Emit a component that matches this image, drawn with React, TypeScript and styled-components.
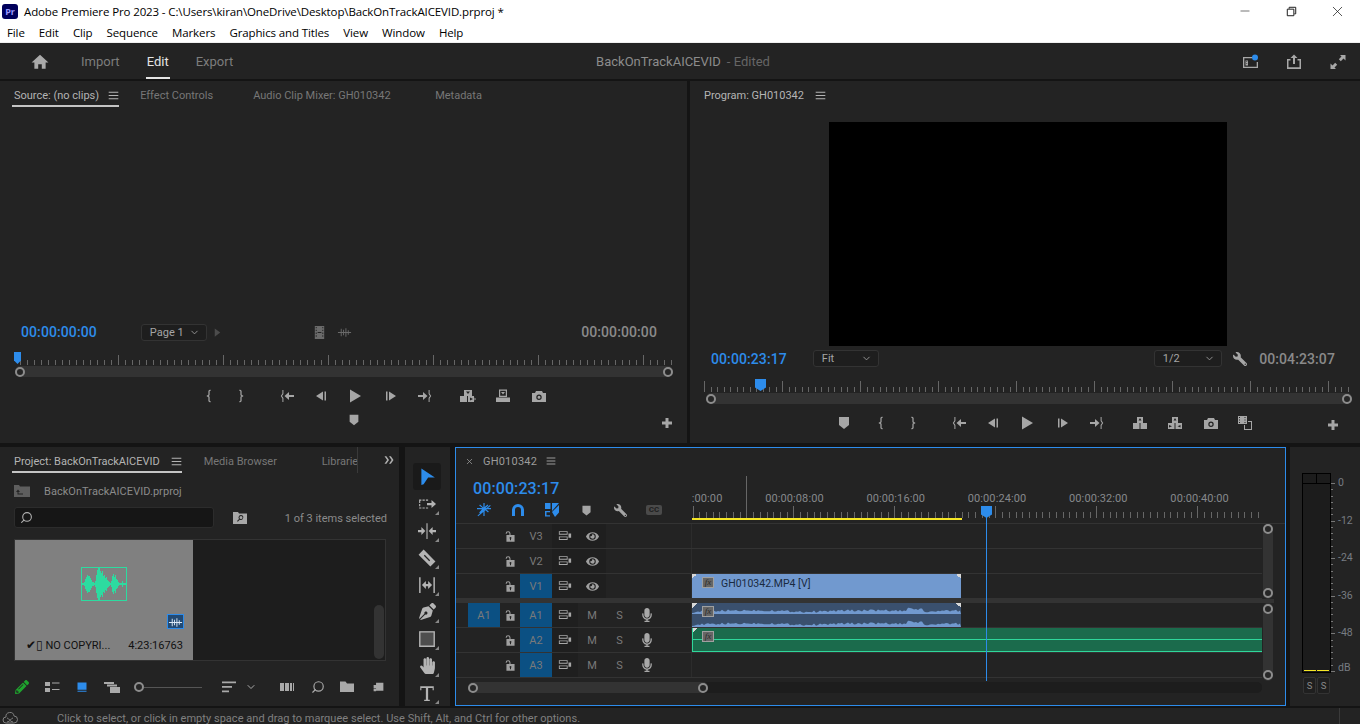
import React from "react"
import styled, {createGlobalStyle} from "styled-components"
import {FaEye, FaHandPaper, FaMicrophone, FaPenNib, FaPencilAlt, FaWrench} from "react-icons/fa"
import {ChevronDown, Search, Minus, X} from "lucide-react"

const GlobalStyle = createGlobalStyle`
    html, body {
        margin: 0;
        padding: 0;
        background: #141414;
    }
    * {
        box-sizing: border-box;
    }
`;

const BLUE = "#2d8ceb";

const Shell = styled.div`
    width: 1360px;
    height: 724px;
    overflow: hidden;
    display: flex;
    flex-direction: column;
    background: #141414;
    font-family: Roboto, "Liberation Sans", sans-serif;
    font-size: 11px;
    color: #9a9a9a;
`;

const TitleBar = styled.div`
    height: 22px;
    background: #fff;
    color: #000;
    display: flex;
    align-items: center;
    padding-left: 2px;
    font: 11.5px "Open Sans", sans-serif;
    letter-spacing: -0.12px;
`;

const AppLogo = styled.div`
    width: 16px;
    height: 15px;
    margin-right: 6px;
    border-radius: 3px;
    background: #00005b;
    color: #9999ff;
    font: bold 9px/15px "Open Sans", sans-serif;
    text-align: center;
`;

const WindowButtons = styled.div`
    margin-left: auto;
    display: flex;
    color: #111;
`;

const WindowButton = styled.div`
    width: 46px;
    height: 22px;
    display: flex;
    align-items: center;
    justify-content: center;
`;

const MenuBar = styled.div`
    height: 21px;
    background: #fff;
    border-bottom: 1px solid #efefef;
    color: #000;
    display: flex;
    align-items: center;
    gap: 14.1px;
    padding: 1px 0 0 7px;
    font: 11.5px "Open Sans", sans-serif;
    letter-spacing: -0.12px;
`;

const Header = styled.div`
    height: 36px;
    background: #232323;
    display: grid;
    grid-template-columns: 1fr auto 1fr;
    align-items: center;
    padding-top: 1px;
`;

const WorkspaceNav = styled.div`
    display: flex;
    align-items: center;
    height: 100%;
    padding-left: 31px;
    color: #aaa;
`;

const NavTab = styled.div<{ $active?: boolean }>`
    height: 100%;
    display: flex;
    align-items: center;
    font-size: 13px;
    margin-left: 25px;
    padding: 0 1px;
    color: ${props => props.$active ? "#e4e4e4" : "#7d7d7d"};
    box-shadow: ${props => props.$active ? "inset 0 -2px 0 #e4e4e4" : "none"};
    &:first-of-type {
        margin-left: 31px;
    }
`;

const DocTitle = styled.div`
    font-size: 13px;
    color: #8c8c8c;
    padding-left: 6px;
    span {
        color: #666;
        margin-left: 6px;
    }
`;

const HeaderIcons = styled.div`
    display: flex;
    justify-content: flex-end;
    gap: 28px;
    padding-right: 14px;
    color: #a8a8a8;
`;

const Workspace = styled.div`
    flex: 1;
    display: flex;
    flex-direction: column;
    gap: 4px;
    padding-top: 2px;
`;

const TopRow = styled.div`
    height: 362px;
    display: flex;
    gap: 3px;
`;

const BottomRow = styled.div`
    height: 259px;
    display: flex;
`;

const Panel = styled.div<{ $w?: number; $pb?: number }>`
    width: ${props => props.$w ? props.$w + "px" : "auto"};
    flex: ${props => props.$w ? "none" : 1};
    padding-bottom: ${props => props.$pb || 0}px;
    background: #232323;
    display: flex;
    flex-direction: column;
    position: relative;
`;

const TabRow = styled.div`
    height: 26px;
    padding-left: 12px;
    display: flex;
    align-items: center;
    flex: none;
`;

const Tab = styled.div<{ $active?: boolean; $bright?: boolean; $w?: number; $ml?: number; $gap?: number; $clip?: boolean }>`
    display: flex;
    align-items: center;
    gap: ${props => props.$gap || 9}px;
    height: 100%;
    padding: 3px 0 0 2px;
    margin-left: ${props => props.$ml || 0}px;
    width: ${props => props.$w ? props.$w + "px" : "auto"};
    flex: none;
    white-space: nowrap;
    overflow: hidden;
    border-right: ${props => props.$clip ? "1px solid #3a3a3a" : "none"};
    color: ${props => props.$active || props.$bright ? "#b4b4b4" : "#777"};
    box-shadow: ${props => props.$active ? "inset 0 -2px 0 #c4c4c4" : "none"};
`;

const Viewer = styled.div`
    flex: 1;
    display: flex;
    align-items: flex-start;
    padding: 15px 0 0 139px;
`;

const VideoFrame = styled.div`
    width: 398px;
    height: 224px;
    background: #000;
`;

const MetaRow = styled.div<{ $pr: number; $mb: number; $h: number }>`
    height: ${props => props.$h}px;
    margin-bottom: ${props => props.$mb}px;
    padding: 0 ${props => props.$pr}px 0 21px;
    display: flex;
    align-items: center;
    flex: none;
`;

const Timecode = styled.div<{ $blue?: boolean; $size?: number; $push?: boolean; $mt?: number }>`
    font-size: ${props => props.$size || 14}px;
    font-weight: 500;
    letter-spacing: 0.1px;
    margin-left: ${props => props.$push ? "auto" : 0};
    margin-top: ${props => props.$mt || 0}px;
    color: ${props => props.$blue ? BLUE : "#8a8a8a"};
`;

const Dropdown = styled.div<{ $ml?: number; $w?: number }>`
    width: ${props => props.$w || 66}px;
    height: 17px;
    margin-left: ${props => props.$ml || 0}px;
    padding: 0 6px 0 8px;
    display: flex;
    align-items: center;
    justify-content: space-between;
    background: #1e1e1e;
    border: 1px solid #333;
    border-radius: 3px;
    color: #a5a5a5;
    svg {
        color: #999;
    }
`;

const RulerWrap = styled.div<{ $h: number }>`
    position: relative;
    height: ${props => props.$h}px;
    flex: none;
    svg {
        display: block;
    }
`;

const PlayheadFlag = styled.div<{ $x: number; $top: number; $w: number }>`
    position: absolute;
    left: ${props => props.$x}px;
    top: ${props => props.$top}px;
    width: ${props => props.$w}px;
    height: 12px;
    background: ${BLUE};
    clip-path: polygon(0 0, 100% 0, 100% 70%, 50% 100%, 0 70%);
`;

const ScrubTrack = styled.div<{ $ml: number; $mr: number }>`
    height: 11px;
    margin: 0 ${props => props.$mr}px 0 ${props => props.$ml}px;
    background: #333;
    border-radius: 5px;
    display: flex;
    align-items: center;
    justify-content: space-between;
    flex: none;
`;

const Knob = styled.div`
    width: 10px;
    height: 10px;
    border-radius: 50%;
    border: 2.5px solid #8d8d8d;
    background: #262626;
    flex: none;
`;

const ControlRow = styled.div<{ $pl: number; $mt: number; $pr?: number }>`
    height: 22px;
    flex: none;
    margin-top: ${props => props.$mt}px;
    padding: 0 ${props => props.$pr || 0}px 0 ${props => props.$pl}px;
    display: flex;
    align-items: center;
    color: #a6a6a6;
`;

const Ctl = styled.div<{ $gap?: number }>`
    width: 16px;
    height: 16px;
    flex: none;
    margin-left: ${props => props.$gap || 0}px;
`;

const AddButton = styled(Ctl)`
    margin-left: auto;
    margin-top: 4px;
`;

const ProjectPath = styled.div`
    height: 16px;
    margin: 10px 0 0 14px;
    display: flex;
    align-items: center;
    gap: 14px;
    color: #8b8b8b;
    font-size: 11px;
    letter-spacing: 0.05px;
`;

const SearchRow = styled.div`
    margin: 8px 12px 0 14px;
    height: 21px;
    display: flex;
    align-items: center;
    color: #8b8b8b;
`;

const SearchBox = styled.div`
    width: 200px;
    height: 21px;
    background: #161616;
    border: 1px solid #2c2c2c;
    border-radius: 3px;
    padding-left: 5px;
    display: flex;
    align-items: center;
    color: #b0b0b0;
    margin-right: 18px;
`;

const FlippedSearch = styled(Search)`
    transform: scaleX(-1);
`;

const FlippedWrench = styled(FaWrench)`
    transform: scaleX(-1);
`;

const Count = styled.div`
    margin-left: auto;
    padding-top: 1px;
    font-size: 11px;
`;

const Bin = styled.div`
    margin: 11px 13px 0 14px;
    height: 122px;
    background: #1d1d1d;
    border: 1px solid #333;
    display: flex;
    position: relative;
`;

const Thumb = styled.div`
    width: 178px;
    background: #808080;
    display: flex;
    flex-direction: column;
    color: #111;
`;

const ThumbWave = styled.div`
    width: 46px;
    height: 34px;
    margin: 27px 0 0 66px;
    border: 1px solid #2ddba0;
`;

const ThumbBadge = styled.div`
    width: 17px;
    height: 15px;
    margin: 13px 0 0 152px;
    background: #234a73;
    border: 1px solid ${BLUE};
    color: #dbe9f7;
`;

const ThumbLabel = styled.div`
    margin-top: 10px;
    padding: 0 10px 0 11px;
    display: flex;
    justify-content: space-between;
    align-items: center;
    white-space: nowrap;
    font-size: 11px;
    b {
        font-family: "DejaVu Sans", sans-serif;
        font-weight: bold;
        font-size: 12px;
        line-height: 12px;
    }
`;

const BinScroll = styled.div`
    position: absolute;
    right: 1px;
    bottom: 1px;
    width: 10px;
    height: 54px;
    border-radius: 5px;
    background: #333;
`;

const ProjectTools = styled.div`
    margin-top: 16px;
    padding-left: 14px;
    height: 20px;
    display: flex;
    align-items: center;
    color: #a9a9a9;
`;

const ToolSpot = styled.div<{ $gap: number; $w?: number; $color?: string }>`
    margin-left: ${props => props.$gap}px;
    width: ${props => props.$w || 16}px;
    height: 16px;
    flex: none;
    display: flex;
    align-items: center;
    justify-content: center;
    color: ${props => props.$color || "inherit"};
`;

const ZoomSlider = styled.div`
    width: 68px;
    margin-left: 14px;
    display: flex;
    align-items: center;
    flex: none;
    &::after {
        content: "";
        flex: 1;
        height: 1px;
        background: #555;
    }
`;

const ToolColumn = styled.div`
    width: 45px;
    margin-left: 6px;
    flex: none;
    background: #232323;
    display: flex;
    flex-direction: column;
    align-items: center;
    padding-top: 16px;
    overflow: hidden;
    color: #b4b4b4;
`;

const ToolBtn = styled.div<{ $selected?: boolean }>`
    width: 28px;
    height: 27px;
    margin-left: -1px;
    flex: none;
    display: flex;
    align-items: center;
    justify-content: center;
    border-radius: 3px;
    background: ${props => props.$selected ? "#1a1a1a" : "transparent"};
    color: ${props => props.$selected ? BLUE : "inherit"};
    position: relative;
    &::after {
        content: "";
        display: ${props => props.$selected ? "none" : "block"};
        position: absolute;
        right: 2px;
        bottom: 2px;
        border: 2px solid transparent;
        border-right-color: #888;
        border-bottom-color: #888;
    }
`;

const TimelinePanel = styled.div`
    width: 831px;
    margin-left: 5px;
    flex: none;
    background: #232323;
    border: 1px solid ${BLUE};
    display: flex;
    flex-direction: column;
    position: relative;
    overflow: hidden;
`;

const SeqTabs = styled.div`
    height: 26px;
    flex: none;
    padding: 0 0 0 9px;
    display: flex;
    align-items: center;
    font-size: 11px;
    letter-spacing: 0.2px;
    color: #9c9c9c;
    span {
        margin: 0 9px 0 9px;
    }
`;

const SeqHead = styled.div`
    height: 50px;
    flex: none;
    display: flex;
    border-bottom: 1px solid #333;
`;

const SeqControls = styled.div`
    width: 236px;
    padding-left: 17px;
    flex: none;
    display: flex;
    flex-direction: column;
`;

const SeqToolRow = styled.div`
    display: flex;
    align-items: center;
    margin: 4px 0 0 2px;
    color: #a4a4a4;
`;

const SeqTool = styled.div<{ $color?: string }>`
    width: 18px;
    height: 16px;
    margin-right: 16px;
    flex: none;
    color: ${props => props.$color || "inherit"};
    display: flex;
    align-items: center;
    justify-content: center;
`;

const CcBadge = styled.div`
    width: 16px;
    height: 10px;
    border-radius: 2px;
    background: #4a4a4a;
    color: #232323;
    font-size: 8px;
    font-weight: 900;
    line-height: 10px;
    text-align: center;
`;

const RulerBox = styled.div`
    width: 570px;
    position: relative;
    overflow: hidden;
    svg {
        position: absolute;
        left: 0;
        top: 0;
    }
`;

const RulerLabels = styled.div`
    display: flex;
    margin: 18px 0 0 -49.5px;
`;

const RulerLabel = styled.div`
    width: 101.3px;
    flex: none;
    text-align: center;
    color: #86898c;
    font-size: 11px;
    letter-spacing: 0.1px;
`;

const TrackGroup = styled.div`
    display: flex;
    flex: none;
`;

const TrackList = styled.div`
    width: 806px;
    flex: none;
`;

const Track = styled.div`
    height: 25px;
    display: flex;
    border-bottom: 1px solid #333;
`;

const TrackHead = styled.div`
    width: 236px;
    padding-left: 12px;
    display: flex;
    flex: none;
    color: #7a7a7a;
    border-right: 1px solid #2c2c2c;
`;

const Cell = styled.div<{ $w: number; $bg?: string }>`
    width: ${props => props.$w}px;
    flex: none;
    background: ${props => props.$bg || "transparent"};
    display: flex;
    align-items: center;
    justify-content: center;
    font-size: 11px;
`;

const TrackLane = styled.div`
    width: 570px;
    display: flex;
    overflow: hidden;
`;

const Clip = styled.div<{ $w: number; $bg: string; $tail?: boolean; $edge?: string }>`
    width: ${props => props.$w}px;
    flex: none;
    background: ${props => props.$bg};
    color: #1a2a40;
    display: flex;
    align-items: flex-start;
    gap: 7px;
    padding: 3px 0 0 ${props => props.$edge ? 9 : 10}px;
    position: relative;
    border-left: ${props => props.$edge ? "1px solid " + props.$edge : "none"};
    &::before, &::after {
        content: "";
        position: absolute;
        top: 0;
        width: 5px;
        height: 5px;
    }
    &::before {
        left: 0;
        background: linear-gradient(135deg, #d8d8d8 50%, transparent 50%);
    }
    &::after {
        right: 0;
        display: ${props => props.$tail ? "block" : "none"};
        background: linear-gradient(225deg, #d8d8d8 50%, transparent 50%);
    }
`;

const ClipName = styled.div`
    font-size: 10.5px;
    line-height: 12px;
    margin-top: 1px;
    position: relative;
`;

const FxBadge = styled.div`
    width: 12px;
    height: 11px;
    flex: none;
    border: 1px solid #a0a0a0;
    background: #666;
    color: #2a2a2a;
    font: italic 9px/9px "Liberation Serif", serif;
    text-align: center;
    position: relative;
`;

const ClipWave = styled.svg`
    position: absolute;
    left: 0;
    top: 0;
`;

const GreenLine = styled.div`
    position: absolute;
    left: 0;
    right: 0;
    top: 11px;
    height: 1px;
    background: #2fd79b;
`;

const GreenBottom = styled(GreenLine)`
    top: 23px;
`;

const TrackDivider = styled.div`
    height: 4px;
    width: 818px;
    background: #333;
    flex: none;
`;

const VScroll = styled.div<{ $tail?: boolean }>`
    width: 10px;
    margin: 0 0 ${props => props.$tail ? "-3px" : 0} 1px;
    background: #333;
    border-radius: 5px;
    display: flex;
    flex-direction: column;
    align-items: center;
    justify-content: space-between;
    padding: ${props => props.$tail ? "1px" : 0} 0 1px;
    flex: none;
`;

const HScroll = styled.div`
    height: 11px;
    margin: 4px 23px 0 12px;
    background: #1d1d1d;
    border-radius: 5px;
    flex: none;
    display: flex;
`;

const HThumb = styled.div`
    width: 240px;
    background: #333;
    border-radius: 5px;
    display: flex;
    align-items: center;
    justify-content: space-between;
`;

const PlayheadLine = styled.div`
    position: absolute;
    left: 530px;
    top: 69px;
    width: 1px;
    height: 164px;
    background: ${BLUE};
`;

const TimelineFlag = styled.div`
    position: absolute;
    left: 525px;
    top: 58px;
    width: 11px;
    height: 12px;
    background: ${BLUE};
    clip-path: polygon(0 0, 100% 0, 100% 70%, 50% 100%, 0 70%);
`;

const MeterPanel = styled.div`
    width: 70px;
    margin-left: 4px;
    flex: none;
    background: #232323;
    padding: 26px 0 0 12px;
    display: flex;
    flex-direction: column;
`;

const MeterBody = styled.div`
    display: flex;
    height: 200px;
`;

const MeterBars = styled.div`
    width: 29px;
    height: 200px;
    background: #1c1c1c;
    border: 1px solid #000;
    display: flex;
    flex-direction: column;
    flex: none;
`;

const MeterCaps = styled.div`
    height: 10px;
    border-bottom: 1px solid #000;
    display: flex;
    justify-content: center;
    flex: none;
    &::after {
        content: "";
        width: 1px;
        background: #000;
    }
`;

const MeterPeak = styled.div`
    margin-top: auto;
    margin-bottom: 1px;
    height: 1px;
    display: flex;
    gap: 1px;
    padding: 0 1px;
    &::before, &::after {
        content: "";
        flex: 1;
        background: #f5e625;
    }
`;

const MeterScale = styled.div`
    position: relative;
    width: 28px;
    svg {
        position: absolute;
        left: 0;
        top: 0;
    }
`;

const MeterLabels = styled.div`
    margin-left: 7px;
    padding-top: 3px;
    display: flex;
    flex-direction: column;
    font-size: 10.5px;
    color: #777c82;
    position: relative;
    line-height: 14px;
`;

const MeterMark = styled.div`
    height: 37.5px;
    flex: none;
    &:last-child {
        margin-top: -3px;
    }
`;

const SoloRow = styled.div`
    display: flex;
    gap: 1px;
    margin: 4px 0 0 1px;
`;

const SoloBtn = styled.div`
    width: 13px;
    height: 17px;
    border: 1px solid #333;
    border-radius: 2px;
    background: #1f1f1f;
    font-size: 9.5px;
    text-align: center;
    line-height: 15px;
    color: #888;
`;

const StatusBar = styled.div`
    height: 16px;
    margin-top: 2px;
    background: #232323;
    display: flex;
    align-items: flex-start;
    padding: 3px 20px 0 2px;
    color: #808080;
    font-size: 11px;
    overflow: hidden;
    span {
        margin: 1px 0 0 39px;
        letter-spacing: 0.03px;
    }
`;

const StatusEnd = styled.div`
    margin: -3px 0 0 auto;
    width: 1px;
    height: 16px;
    background: #3a3a3a;
`;

// every transport / tool glyph on one 16x16 grid
const glyphs: Record<string, React.ReactNode> = {
    menu: <path d="M1 2.5h14v1.4H1zM1 7.3h14v1.4H1zM1 12.1h14v1.4H1z"/>,
    home: <path d="M8 1.5l7.5 7H13V14H9.6v-4H6.4v4H3V8.5H.5z"/>,
    braceIn: <path fill="none" stroke="currentColor" strokeWidth="1.2" d="M9.5 2L8 3v4L6.5 8 8 9v4l1.5 1"/>,
    braceOut: <path fill="none" stroke="currentColor" strokeWidth="1.2" d="M6.5 2L8 3v4l1.5 1L8 9v4l-1.5 1"/>,
    goIn: <path d="M3.4 2h1v4l-1.4 2 1.4 2v4h-1v-3.6L1.8 8l1.6-2.4zM15 7h-5V4L5.5 8l4.5 4V9h5z"/>,
    goOut: <path d="M12.6 2h-1v4l1.4 2-1.4 2v4h1v-3.6L14.2 8l-1.6-2.4zM1 7h5V4l4.5 4L6 12V9H1z"/>,
    stepBack: <path d="M10 3.5v9L3 8zM11.5 3.5H13v9h-1.5z"/>,
    stepFwd: <path d="M6 3.5v9L13 8zM3 3.5h1.5v9H3z"/>,
    play: <path d="M3 1.5L14 8 3 14.5z"/>,
    marker: <path d="M3 2h10v8l-5 4-5-4z"/>,
    plus: <path d="M6.5 3h3v3.5H13v3H9.5V13h-3V9.5H3v-3h3.5z"/>,
    insert: <path fillRule="evenodd" d="M4 2h8v6H4zm2 1.5L8 6l2-2.5zM0 8h7v6H0zM8 8h6v6H8zm2 1.5v3l3-1.5zM14.5 9.5L16 11l-1.5 1.5z"/>,
    overwrite: <path fillRule="evenodd" d="M4 1.5h8V9H4zm1.2 1.2v5h5.6v-5zM6 4h4L8 6.5zM1 9.5h14V14H1z"/>,
    lift: <path fillRule="evenodd" d="M5 2h6v6H5zm3 1L6.5 5.5h3zM1 8h6.5v6H1zM8.5 8H15v6H8.5z"/>,
    extract: <path fillRule="evenodd" d="M5 2h6v6H5zm3 1L6.5 5.5h3zM1 8h6.5v6H1zm1 2v2.5L5 11.2zM8.5 8H15v6H8.5zm5 2L10.5 11.2l3 1.3z"/>,
    camera: <path fillRule="evenodd" d="M5 3h6l1 2h3v9H1V5h3zm3 3.5a2.7 2.7 0 100 5.4 2.7 2.7 0 000-5.4zm0 1.2a1.5 1.5 0 110 3 1.5 1.5 0 010-3z"/>,
    compare: <path fillRule="evenodd" d="M1 1h9v8H1zm1 1v1h1V2zm0 2.5v1h1v-1zM2 7v1h1V7zm5.5-5v1h1V2zm0 2.5v1h1v-1zM7.5 7v1h1V7zM11 6h4v9H7v-5h1v4h6V7h-3z"/>,
    film: <path fillRule="evenodd" d="M3 1h10v14H3zm1 1v1.5h1V2zm7 0v1.5h1V2zM4 5v1.5h1V5zm7 0v1.5h1V5zM4 8v1.5h1V8zm7 0v1.5h1V8zm-7 3v1.5h1V11zm7 0v1.5h1V11zM6 7.5h4v1H6z"/>,
    waves: <path d="M1 7.5h14v1H1zM4 4h1v8H4zM6.5 5h1v6h-1zM9 3.5h1v9H9zM11.5 5.5h1v5h-1z"/>,
    triRight: <path d="M4 2l8 6-8 6z"/>,
    folderUp: <path fillRule="evenodd" d="M0 2h5l1 1.5h10V14H0zm4 4.5L2 9h1.5v2.5H9v-1H4.5V9H6z"/>,
    folderFind: <path fillRule="evenodd" d="M1 2h5l1 1.5h8V14H1zm8 3a2.5 2.5 0 00-2 4l-2 2 .8.8 2-2A2.5 2.5 0 109 5zm0 1a1.5 1.5 0 110 3 1.5 1.5 0 010-3z"/>,
    folder: <path d="M1 2.5h5.5l1.5 2h7V13H1z"/>,
    newItem: <path fillRule="evenodd" d="M5 2h9v10h-9V9H2V5h3zM2 9.5h3v3H2z"/>,
    listView: <path d="M1 3h5v4H1zM1 9h5v4H1zM8 3.5h7.5v1H8zM8 10h7.5v1H8z"/>,
    iconView: <path d="M2 2h12v9.5H2zM2 13h12v1.2H2z"/>,
    freeform: <path fillRule="evenodd" d="M0 3h10v2H0zM3 5.5h10v2H3zM6 8h10v6H6z"/>,
    sort: <path d="M1 2.5h14v1.7H1zM1 7h10v1.7H1zM1 11.5h7v1.7H1z"/>,
    automate: <path d="M1 4h4v8H1zM6 4h4v8H6zM11 4h2v8h-2zM14 4h1v8h-1z"/>,
    selection: <path d="M3 .5L15 8.5H9L5 14.5 3 15z"/>,
    trackSelect: <path d="M1 4h2v1H1zM4 4h2v1H4zM1 5v2h1V5zM1 8v2h1V8zM1 11h2v1H1zM4 11h2v1H4zM7 11h2v1H7zM7 4h2v1H7zM8 7h4V4.5L16 8l-4 3.5V9H8z"/>,
    ripple: <path d="M7.5 1h1v14h-1zM6.5 8L3 4.5V7H0v2h3v2.5zM9.5 8L13 4.5V7h3v2h-3v2.5z"/>,
    razor: <path fillRule="evenodd" d="M5 .5L15.5 11 11 15.5.5 5zM6 5.200L5.200 6 10 10.800l.8-.8z"/>,
    slip: <path d="M1 1h1.3v14H1zM13.7 1H15v14h-1.3zM3.5 8L7 4.5V7h2V4.5L12.5 8 9 11.5V9H7v2.5z"/>,
    rect: <>
        <path d="M1 1h14v14H1z" opacity=".3"/>
        <path fillRule="evenodd" d="M1 1h14v14H1zm1.2 1.2v11.6h11.6V2.200z"/>
    </>,
    text: <path d="M2 2h12v3.5h-1V3.5H9V14h1.5v1h-5v-1H7V3.5H3v2H2z"/>,
    snap: <path d="M7.4 1h1.2v4l3-2.500.8.9L9.500 6H15v1.200H10l2.800 2.400-.8.9-3.400-3V14H7.400V8.500l-3.400 3-.8-.9L6 7.200H1V6h5.500L3.200 3.400 4 2.500l3.400 3zM1.500 13.500L14 3l.7.8L2.200 14.300z"/>,
    magnet: <path fillRule="evenodd" d="M2 14V8a6 6 0 0112 0v6h-3V8a3 3 0 00-6 0v6z"/>,
    linked: <path d="M1 1h5.500v6H1zM8 1h7L8 9zM8 10l7-7v7.500l-4 4.500zM1 9h5v1.200H2.500v3H6v1.200H1z"/>,
    toggle: <path fillRule="evenodd" d="M1 2.500h10v4H1zm1 1v2h8v-2zM1 8.500h10v4H1zm1 1v2h8v-2zM12 5h3v5h-3z"/>,
    lock: <path fillRule="evenodd" d="M5 1.500a3 3 0 013 3V6h5v8.500H3V6h3.700V4.500a1.700 1.700 0 00-3.400 0H2a3 3 0 013-3zM8 8.500a1.200 1.200 0 00-.6 2.200V12.500h1.200v-1.800A1.200 1.200 0 008 8.500z"/>,
    workspaces: <>
        <path fillRule="evenodd" d="M1 3h9v1.300H2.300v8.400h12.400V8H16v6H1zM3.500 6.500H6v5H3.500zM4.300 7.300v.8h.9v-.8zm0 2v.8h.9v-.8z"/>
        <circle cx="13" cy="3.500" r="3" fill={BLUE}/>
    </>,
    share: <path fillRule="evenodd" d="M8 .5L11.500 4H9v6H7V4H4.500zM1 5h3.500v1.500H2.500v6.800h11V6.500h-2V5H15v10H1z"/>,
    fullscreen: <path d="M10 1h5.500v5.500L13.500 4.500 10.800 7.200 8.800 5.200 11.500 2.500zM6 15H.5V9.500L2.500 11.500 5.200 8.800 7.200 10.800 4.500 13.500z"/>,
    cloud: <path fill="none" stroke="currentColor" d="M4 12a3 3 0 010-6 4 4 0 018-1 3.500 3.500 0 010 7zM5 7c2 0 3 4 6 4M11 7c-2 0-3 4-6 4"/>,
    restore: <path fill="none" stroke="currentColor" strokeWidth="1" d="M3.500 5.500h7v7h-7zM5.500 5V3.500h7v7H11"/>,
    more: <path d="M2 3h2.500L8 8l-3.500 5H2l3.500-5zM8 3h2.500L14 8l-3.500 5H8l3.500-5z"/>,
};

const Glyph = ({name, size = 16, color}: { name: string; size?: number; color?: string }) => (
    <svg width={size} height={size} viewBox="0 0 16 16" fill="currentColor" color={color}>
        {glyphs[name]}
    </svg>
)

const Ticks = ({width, height, start, step, every, major, minor, from = 0, baseline}: {
    width: number; height: number; start: number; step: number; every: number;
    major: number; minor: number; from?: number; baseline: number;
}) => {
    let d = ""
    for (let i = 0; start + i * step < width; i++) {
        const x = Math.round(start + i * step) + 0.5
        if (x < from) continue
        d += `M${x} ${baseline}v-${i % every === 0 ? major : minor}`
    }
    return (
        <svg width={width} height={height}>
            <path d={d} stroke="#666" fill="none"/>
        </svg>
    )
}

// dB scale next to the meter: one long tick every 6 steps
const MeterTicks = () => {
    let d = ""
    for (let i = 0; i <= 30; i++) {
        const y = Math.round(10 + i * 6.26) + 0.5
        d += `M0 ${y}h${i % 6 === 0 ? 4 : 2}`
    }
    return (
        <svg width={6} height={200}>
            <path d={d} stroke="#777"/>
        </svg>
    )
}

// repeatable pseudo noise so the clip wave keeps its shape between renders
const noise = (i: number) => {
    const v = Math.sin(i * 12.9898) * 43758.5453
    return v - Math.floor(v)
}

const audioWave = (base: number, width: number) => {
    let d = `M0 ${base}`
    for (let x = 0; x <= width; x += 2) {
        const swell = 1 + 1.5 * Math.abs(Math.sin(x / 37)) + (x > 215 && x < 232 ? 2.5 : 0)
        d += `L${x} ${(base - swell - noise(x) * 2.2).toFixed(1)}`
    }
    return d + `L${width} ${base}Z`
}

const thumbAmps = [1, 1, 2, 5, 7, 9, 8, 8, 6, 4, 2, 2, 1, 3, 9, 14, 12, 16, 13, 11, 13, 8, 9, 6, 7, 4, 3, 2, 1, 3, 8, 10, 7, 9, 5, 4, 2, 1, 1, 1, 3, 1, 1, 1]

const ThumbWaveform = () => {
    const d = thumbAmps.map((a, i) => `M${i + 0.5} ${16 - a}v${a * 2}`).join("")
    return (
        <svg width="44" height="32" stroke="#2ddba0">
            <path d={d}/>
            <path d="M16.5 0v32"/>
        </svg>
    )
}

const Controls = ({names}: { names: [string, number][] }) => (
    <>
        {names.map(([name, gap], i) => (
            <Ctl key={name + i} $gap={gap}><Glyph name={name}/></Ctl>
        ))}
    </>
)

const sourceControls: [string, number][] = [
    ["braceIn", 0], ["braceOut", 16], ["goIn", 30], ["stepBack", 18], ["play", 18],
    ["stepFwd", 20], ["goOut", 18], ["insert", 27], ["overwrite", 19], ["camera", 20],
]

const programControls: [string, number][] = [
    ["marker", 0], ["braceIn", 21], ["braceOut", 16], ["goIn", 30], ["stepBack", 18], ["play", 18],
    ["stepFwd", 20], ["goOut", 18], ["lift", 27], ["extract", 19], ["camera", 20], ["compare", 18],
]

const menus = ["File", "Edit", "Clip", "Sequence", "Markers", "Graphics and Titles", "View", "Window", "Help"]
const tools = ["trackSelect", "ripple", "razor", "slip", "pen", "rect", "hand", "text"]
const rulerTimes = ["00:00:00:00", "00:00:08:00", "00:00:16:00", "00:00:24:00", "00:00:32:00", "00:00:40:00"]
const meterMarks = ["0", "-12", "-24", "-36", "-48", "dB"]

const ToolGlyph = ({name}: { name: string }) => {
    if (name === "pen") return <FaPenNib size={17}/>
    if (name === "hand") return <FaHandPaper size={17}/>
    return <Glyph name={name} size={18}/>
}

const VideoTrack = ({name, target}: { name: string; target?: boolean }) => (
    <TrackHead>
        <Cell $w={32}/>
        <Cell $w={20}><Glyph name="lock" size={13} color="#a0a0a0"/></Cell>
        <Cell $w={32} $bg={target ? "#0b5083" : undefined}>{name}</Cell>
        <Cell $w={26} $bg="#1f1f1f"><Glyph name="toggle" size={14} color="#a8a8a8"/></Cell>
        <Cell $w={28} $bg="#1f1f1f"><FaEye size={13} color="#a0a0a0"/></Cell>
    </TrackHead>
)

const AudioTrack = ({name, source}: { name: string; source?: boolean }) => (
    <TrackHead>
        <Cell $w={32} $bg={source ? "#0b5083" : undefined}>{source ? "A1" : ""}</Cell>
        <Cell $w={20}><Glyph name="lock" size={13} color="#a0a0a0"/></Cell>
        <Cell $w={32} $bg="#0b5083">{name}</Cell>
        <Cell $w={26} $bg="#1f1f1f"><Glyph name="toggle" size={14} color="#a8a8a8"/></Cell>
        <Cell $w={28}>M</Cell>
        <Cell $w={27}>S</Cell>
        <Cell $w={27}><FaMicrophone size={14} color="#a8a8a8"/></Cell>
    </TrackHead>
)

const App = () => {
    return (
        <Shell>
            <GlobalStyle/>
            <TitleBar>
                <AppLogo>Pr</AppLogo>
                Adobe Premiere Pro 2023 - C:\Users\kiran\OneDrive\Desktop\BackOnTrackAICEVID.prproj *
                <WindowButtons>
                    <WindowButton><Minus size={14} strokeWidth={1}/></WindowButton>
                    <WindowButton><Glyph name="restore" size={15}/></WindowButton>
                    <WindowButton><X size={17} strokeWidth={1}/></WindowButton>
                </WindowButtons>
            </TitleBar>
            <MenuBar>
                {menus.map(m => <div key={m}>{m}</div>)}
            </MenuBar>
            <Header>
                <WorkspaceNav>
                    <Glyph name="home" size={18}/>
                    <NavTab>Import</NavTab>
                    <NavTab $active>Edit</NavTab>
                    <NavTab>Export</NavTab>
                </WorkspaceNav>
                <DocTitle>BackOnTrackAICEVID<span>- Edited</span></DocTitle>
                <HeaderIcons>
                    <Glyph name="workspaces"/>
                    <Glyph name="share"/>
                    <Glyph name="fullscreen"/>
                </HeaderIcons>
            </Header>
            <Workspace>
                <TopRow>
                    <Panel $w={687} $pb={11}>
                        <TabRow>
                            <Tab $active>Source: (no clips) <Glyph name="menu" size={11}/></Tab>
                            <Tab $w={113} $ml={19}>Effect Controls</Tab>
                            <Tab $w={182}>Audio Clip Mixer: GH010342</Tab>
                            <Tab>Metadata</Tab>
                        </TabRow>
                        <Viewer/>
                        <MetaRow $pr={30} $mb={11} $h={18}>
                            <Timecode $blue>00:00:00:00</Timecode>
                            <Dropdown $ml={44}>Page 1 <ChevronDown size={11}/></Dropdown>
                            <ToolSpot $gap={5} $w={12} $color="#4c4c4c"><Glyph name="triRight" size={11}/></ToolSpot>
                            <ToolSpot $gap={88} $color="#6a6a6a"><Glyph name="film" size={15}/></ToolSpot>
                            <ToolSpot $gap={9} $color="#6a6a6a"><Glyph name="waves" size={15}/></ToolSpot>
                            <Timecode $push>00:00:00:00</Timecode>
                        </MetaRow>
                        <RulerWrap $h={14}>
                            <Ticks width={673} height={14} start={13} step={7} every={15} major={10} minor={5} from={20} baseline={13}/>
                            <PlayheadFlag $x={14} $top={0} $w={7}/>
                        </RulerWrap>
                        <ScrubTrack $ml={15} $mr={14}>
                            <Knob/>
                            <Knob/>
                        </ScrubTrack>
                        <ControlRow $pl={201} $mt={8}>
                            <Controls names={sourceControls}/>
                        </ControlRow>
                        <ControlRow $pl={347} $mt={3} $pr={12}>
                            <Ctl><Glyph name="marker" size={14}/></Ctl>
                            <AddButton><Glyph name="plus"/></AddButton>
                        </ControlRow>
                    </Panel>
                    <Panel $pb={9}>
                        <TabRow>
                            <Tab $w={130} $bright $gap={11}>Program: GH010342 <Glyph name="menu" size={11}/></Tab>
                        </TabRow>
                        <Viewer><VideoFrame/></Viewer>
                        <MetaRow $pr={25} $mb={14} $h={17}>
                            <Timecode $blue>00:00:23:17</Timecode>
                            <Dropdown $ml={26}>Fit <ChevronDown size={11}/></Dropdown>
                            <Dropdown $ml={275} $w={68}>1/2 <ChevronDown size={11}/></Dropdown>
                            <ToolSpot $gap={10} $color="#a6a6a6"><FlippedWrench size={14}/></ToolSpot>
                            <Timecode $push>00:04:23:07</Timecode>
                        </MetaRow>
                        <RulerWrap $h={12}>
                            <Ticks width={660} height={12} start={14} step={6.5} every={12} major={11} minor={5} baseline={11}/>
                            <PlayheadFlag $x={65} $top={-2} $w={11}/>
                        </RulerWrap>
                        <ScrubTrack $ml={16} $mr={8}>
                            <Knob/>
                            <Knob/>
                        </ScrubTrack>
                        <ControlRow $pl={146} $mt={8} $pr={19}>
                            <Controls names={programControls}/>
                            <AddButton><Glyph name="plus"/></AddButton>
                        </ControlRow>
                    </Panel>
                </TopRow>
                <BottomRow>
                    <Panel $w={399}>
                        <TabRow>
                            <Tab $active $gap={11}><span>Project: BackOnTrackAICEVID</span><Glyph name="menu" size={11}/></Tab>
                            <Tab $w={118} $ml={20}>Media Browser</Tab>
                            <Tab $w={38} $clip>Libraries</Tab>
                            <ToolSpot $gap={23} $color="#b0b0b0"><Glyph name="more" size={12}/></ToolSpot>
                        </TabRow>
                        <ProjectPath>
                            <Glyph name="folderUp" color="#5e5e5e"/>
                            <span>BackOnTrackAICEVID.prproj</span>
                        </ProjectPath>
                        <SearchRow>
                            <SearchBox><FlippedSearch size={13}/></SearchBox>
                            <Glyph name="folderFind" color="#a8a8a8"/>
                            <Count>1 of 3 items selected</Count>
                        </SearchRow>
                        <Bin>
                            <Thumb>
                                <ThumbWave><ThumbWaveform/></ThumbWave>
                                <ThumbBadge><Glyph name="waves" size={15}/></ThumbBadge>
                                <ThumbLabel>
                                    <span><b>✔▯</b> NO COPYRI...</span>
                                    <span>4:23:16763</span>
                                </ThumbLabel>
                            </Thumb>
                            <BinScroll/>
                        </Bin>
                        <ProjectTools>
                            <ToolSpot $gap={0} $color="#1fa32e"><FaPencilAlt size={14}/></ToolSpot>
                            <ToolSpot $gap={14}><Glyph name="listView"/></ToolSpot>
                            <ToolSpot $gap={14} $color={BLUE}><Glyph name="iconView" size={12}/></ToolSpot>
                            <ToolSpot $gap={14}><Glyph name="freeform" size={18}/></ToolSpot>
                            <ZoomSlider><Knob/></ZoomSlider>
                            <ToolSpot $gap={19}><Glyph name="sort"/></ToolSpot>
                            <ToolSpot $gap={6}><ChevronDown size={12}/></ToolSpot>
                            <ToolSpot $gap={20}><Glyph name="automate"/></ToolSpot>
                            <ToolSpot $gap={15}><FlippedSearch size={14}/></ToolSpot>
                            <ToolSpot $gap={13}><Glyph name="folder"/></ToolSpot>
                            <ToolSpot $gap={15}><Glyph name="newItem" size={13}/></ToolSpot>
                        </ProjectTools>
                    </Panel>
                    <ToolColumn>
                        <ToolBtn $selected><Glyph name="selection" size={18}/></ToolBtn>
                        {tools.map(t => <ToolBtn key={t}><ToolGlyph name={t}/></ToolBtn>)}
                    </ToolColumn>
                    <TimelinePanel>
                        <SeqTabs>
                            <X size={9}/>
                            <span>GH010342</span>
                            <Glyph name="menu" size={10}/>
                        </SeqTabs>
                        <SeqHead>
                            <SeqControls>
                                <Timecode $blue $size={16} $mt={5}>00:00:23:17</Timecode>
                                <SeqToolRow>
                                    <SeqTool $color={BLUE}><Glyph name="snap"/></SeqTool>
                                    <SeqTool $color={BLUE}><Glyph name="magnet"/></SeqTool>
                                    <SeqTool $color={BLUE}><Glyph name="linked"/></SeqTool>
                                    <SeqTool><Glyph name="marker" size={13}/></SeqTool>
                                    <SeqTool><FlippedWrench size={13}/></SeqTool>
                                    <SeqTool><CcBadge>CC</CcBadge></SeqTool>
                                </SeqToolRow>
                            </SeqControls>
                            <RulerBox>
                                <Ticks width={570} height={49} start={0.5} step={6.73} every={15} major={12} minor={6} baseline={44}/>
                                <svg width={570} height={49}>
                                    <path d="M54.5 2v42" stroke="#666"/>
                                    <path d="M0 45h270" stroke="#f5e625" strokeWidth="2"/>
                                </svg>
                                <RulerLabels>
                                    {rulerTimes.map(t => <RulerLabel key={t}>{t}</RulerLabel>)}
                                </RulerLabels>
                            </RulerBox>
                        </SeqHead>
                        <TrackGroup>
                            <TrackList>
                                <Track><VideoTrack name="V3"/><TrackLane/></Track>
                                <Track><VideoTrack name="V2"/><TrackLane/></Track>
                                <Track>
                                    <VideoTrack name="V1" target/>
                                    <TrackLane>
                                        <Clip $w={269} $bg="#7199cf" $tail>
                                            <FxBadge>fx</FxBadge>
                                            <ClipName>GH010342.MP4 [V]</ClipName>
                                        </Clip>
                                    </TrackLane>
                                </Track>
                            </TrackList>
                            <VScroll><Knob/><Knob/></VScroll>
                        </TrackGroup>
                        <TrackDivider/>
                        <TrackGroup>
                            <TrackList>
                                <Track>
                                    <AudioTrack name="A1" source/>
                                    <TrackLane>
                                        <Clip $w={269} $bg="#3a506e" $tail>
                                            <ClipWave width={269} height={24}>
                                                <path d={audioWave(11, 269)} fill="#7199cf"/>
                                                <path d={audioWave(24, 269)} fill="#7199cf"/>
                                            </ClipWave>
                                            <FxBadge>fx</FxBadge>
                                        </Clip>
                                    </TrackLane>
                                </Track>
                                <Track>
                                    <AudioTrack name="A2"/>
                                    <TrackLane>
                                        <Clip $w={570} $bg="#1b6b4c" $edge="#2fd79b">
                                            <GreenLine/>
                                            <GreenBottom/>
                                            <FxBadge>fx</FxBadge>
                                        </Clip>
                                    </TrackLane>
                                </Track>
                                <Track><AudioTrack name="A3"/><TrackLane/></Track>
                            </TrackList>
                            <VScroll $tail><Knob/><Knob/></VScroll>
                        </TrackGroup>
                        <HScroll>
                            <HThumb><Knob/><Knob/></HThumb>
                        </HScroll>
                        <TimelineFlag/>
                        <PlayheadLine/>
                    </TimelinePanel>
                    <MeterPanel>
                        <MeterBody>
                            <MeterBars>
                                <MeterCaps/>
                                <MeterPeak/>
                            </MeterBars>
                            <MeterScale>
                                <MeterTicks/>
                                <MeterLabels>
                                    {meterMarks.map(m => <MeterMark key={m}>{m}</MeterMark>)}
                                </MeterLabels>
                            </MeterScale>
                        </MeterBody>
                        <SoloRow><SoloBtn>S</SoloBtn><SoloBtn>S</SoloBtn></SoloRow>
                    </MeterPanel>
                </BottomRow>
            </Workspace>
            <StatusBar>
                <Glyph name="cloud" size={16}/>
                <span>Click to select, or click in empty space and drag to marquee select. Use Shift, Alt, and Ctrl for other options.</span>
                <StatusEnd/>
            </StatusBar>
        </Shell>
    )
}

export default App
